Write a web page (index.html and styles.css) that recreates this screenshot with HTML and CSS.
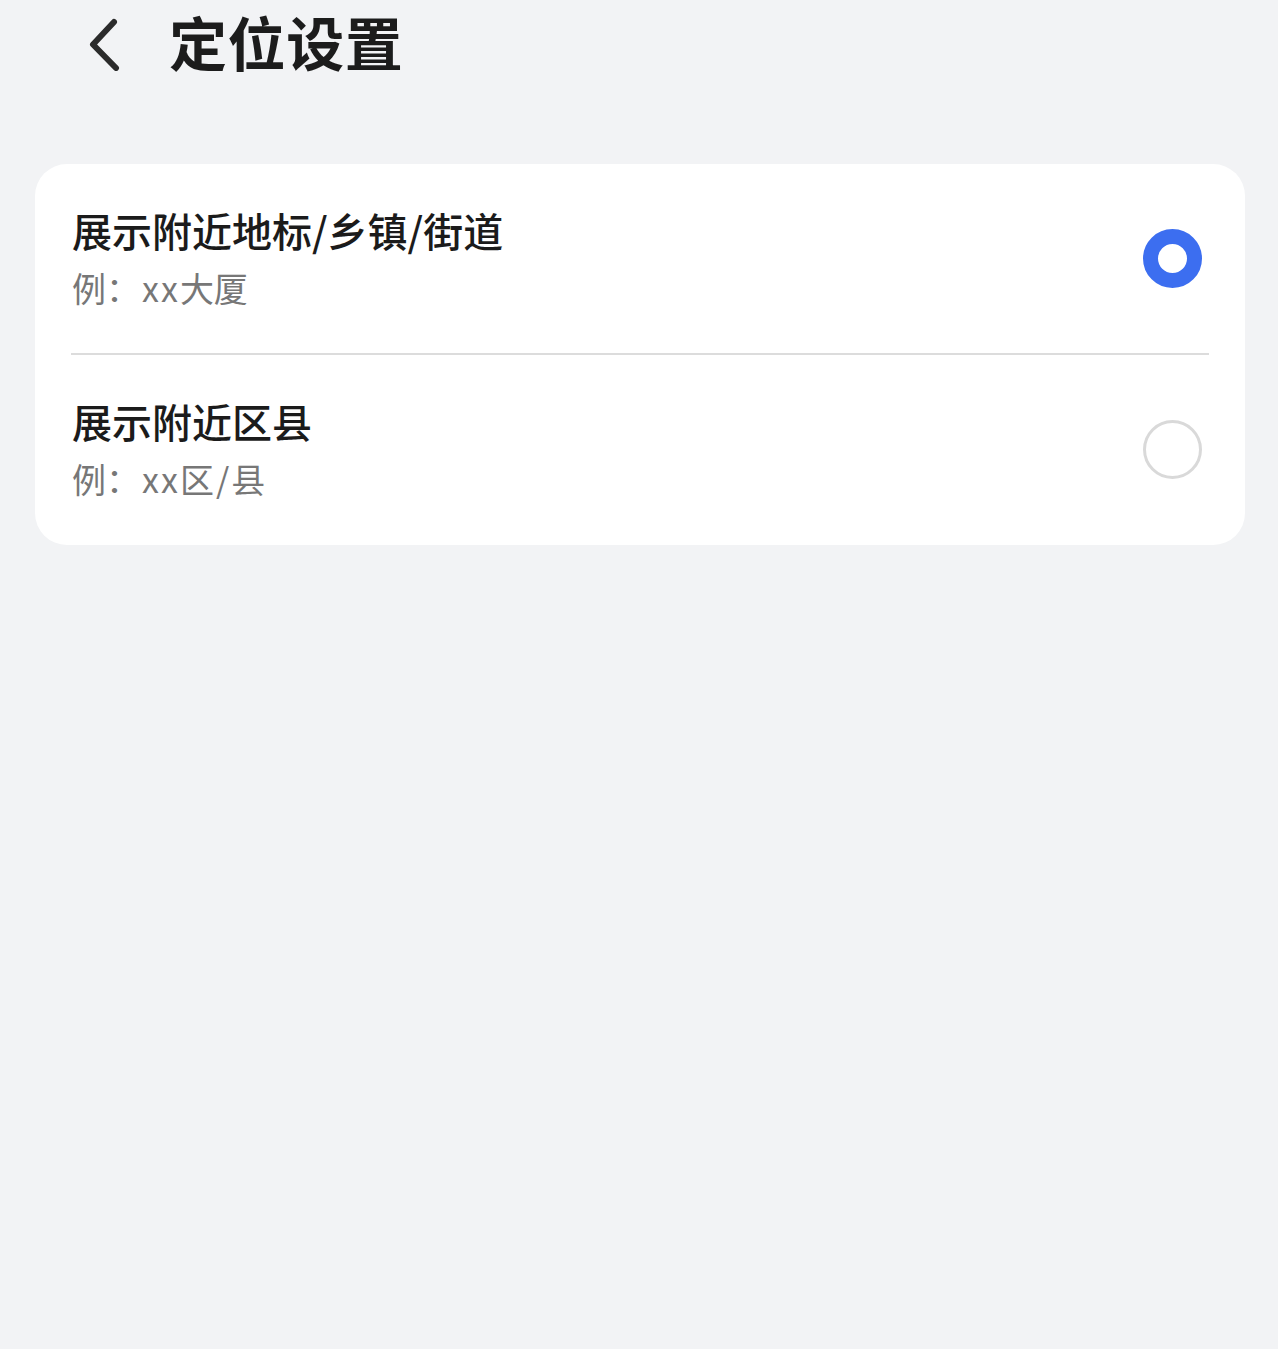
FILE: index.html
```html
<!DOCTYPE html>
<html lang="zh-CN">
<head>
<meta charset="utf-8">
<title>定位设置</title>
<link rel="stylesheet" href="styles.css">
</head>
<body>
<header class="topbar">
  <button class="back" aria-label="返回">
    <svg width="40" height="60" viewBox="0 0 40 60">
      <path d="M26 11 L5 33.5 L28 57" fill="none" stroke="#2b2b2b" stroke-width="6" stroke-linecap="round" stroke-linejoin="round"/>
    </svg>
  </button>
  <h1 class="title">定位设置</h1>
</header>
<main class="card">
  <div class="row">
    <div class="texts">
      <div class="row-title">展示附近地标/乡镇/街道</div>
      <div class="row-sub">例：<span class="latin">xx</span>大厦</div>
    </div>
    <span class="radio radio-on"></span>
  </div>
  <div class="divider"></div>
  <div class="row">
    <div class="texts">
      <div class="row-title">展示附近区县</div>
      <div class="row-sub">例：<span class="latin">xx</span>区<span class="slash">/</span>县</div>
    </div>
    <span class="radio radio-off"></span>
  </div>
</main>
</body>
</html>
```

FILE: styles.css
```css
html, body {
  margin: 0;
  padding: 0;
  background: #f2f3f5;
  font-family: "Noto Sans CJK SC", "Noto Sans", sans-serif;
}
body {
  width: 1278px;
  min-height: 1349px;
}
.topbar {
  display: flex;
  align-items: center;
  height: 90px;
  padding-left: 88px;
}
.back {
  border: 0;
  background: none;
  padding: 0;
  width: 40px;
  height: 60px;
  display: flex;
  margin-bottom: 8px;
}
.title {
  margin: 0 0 0 41px;
  font-size: 58px;
  font-weight: 700;
  color: #1c1c1c;
  line-height: 1;
  position: relative;
  top: -4px;
  letter-spacing: 0.6px;
}
.card {
  margin: 74px 33px 0 35px;
  background: #ffffff;
  border-radius: 32px;
  padding: 0 36px;
}
.row {
  display: flex;
  align-items: center;
  justify-content: space-between;
  height: 189px;
}
.row:last-child {
  height: 190px;
}
.texts {
  display: flex;
  flex-direction: column;
  gap: 10px;
  padding-left: 1px;
  margin-top: -2px;
}
.row-title {
  font-size: 40px;
  font-weight: 500;
  color: #1b1b1b;
  line-height: 50px;
}
.row-sub {
  font-size: 34px;
  color: #777777;
  line-height: 46px;
}
.latin {
  letter-spacing: 2px;
  margin-left: 2px;
}
.slash {
  margin: 0 2px;
}
.divider {
  height: 1.5px;
  background: #dcdcdc;
}
.radio {
  display: block;
  box-sizing: border-box;
  width: 59px;
  height: 59px;
  border-radius: 50%;
  margin-right: 7px;
}
.radio-on {
  border: 15px solid #3c6ef0;
  background: #ffffff;
}
.radio-off {
  border: 3px solid #d9d9d9;
  background: #ffffff;
}
```
